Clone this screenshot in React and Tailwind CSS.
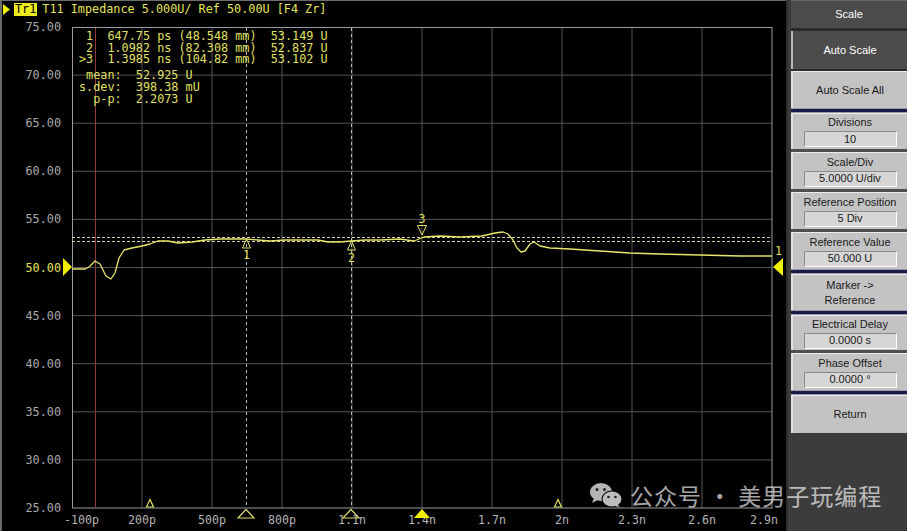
import React from "react";

const yVals = ["75.00", "70.00", "65.00", "60.00", "55.00", "50.00", "45.00", "40.00", "35.00", "30.00", "25.00"];
const xVals = ["-100p", "200p", "500p", "800p", "1.1n", "1.4n", "1.7n", "2n", "2.3n", "2.6n", "2.9n"];

const trace = [
  [72, 269], [85, 269], [89, 267], [95, 261], [100, 264], [106, 276], [111, 279], [115, 273], [119, 258],
  [124, 250], [132, 248], [142, 246], [150, 244], [158, 241], [168, 241], [178, 243], [192, 242], [205, 240],
  [220, 239], [235, 239], [246, 239], [258, 240], [270, 241], [285, 240], [300, 240], [318, 240], [328, 242],
  [340, 242], [351, 241], [365, 240], [380, 240], [400, 239], [414, 241], [424, 237], [440, 236], [460, 237],
  [482, 236], [495, 233], [503, 232], [508, 234], [513, 240], [517, 248], [521, 252], [525, 251], [530, 244],
  [534, 242], [540, 246], [550, 248], [570, 249], [600, 251], [630, 253], [660, 254], [700, 255], [740, 256], [772, 256],
];

function Box({ children }) {
  return (
    <div className="mx-auto mt-[2px] flex h-[16px] w-[93px] items-center justify-center border border-t-[#8a8a8a] border-l-[#8a8a8a] border-r-white border-b-white bg-[#d6d6d6] text-[11px] leading-none text-[#1a1a1a]">
      {children}
    </div>
  );
}

function Field({ label, value, h = "h-[37px]" }) {
  return (
    <div className={`${h} flex flex-col items-center justify-center border-t border-l-2 border-t-[#ececec] border-l-[#e2e2e2] bg-[#c3c3c3]`}>
      <div className="text-[11px] leading-[13px] text-[#1a1a1a]">{label}</div>
      <Box>{value}</Box>
    </div>
  );
}

function Btn({ children, h = "h-[37px]" }) {
  return (
    <div className={`${h} flex flex-col items-center justify-center border-t border-l-2 border-t-[#ececec] border-l-[#e2e2e2] bg-[#c3c3c3] text-[11px] leading-[15px] text-[#1a1a1a]`}>
      {children}
    </div>
  );
}

const Gap = () => <div className="h-[3px] bg-[#4e4e4e]" />;
const Navy = () => (
  <div className="flex h-[5px] flex-col justify-center bg-[#9a9aa4]">
    <div className="h-[3px] bg-[#1a1a4a]" />
  </div>
);

function WeChat() {
  return (
    <svg width="34" height="26" viewBox="0 0 34 26">
      <ellipse cx="12" cy="10" rx="11" ry="9" fill="#b4b4b4" />
      <path d="M5 16 L3 21 L9 18 Z" fill="#b4b4b4" />
      <circle cx="8" cy="7.5" r="1.5" fill="#222" />
      <circle cx="15.5" cy="7.5" r="1.5" fill="#222" />
      <ellipse cx="23" cy="17" rx="10.5" ry="8.5" fill="#000" />
      <ellipse cx="23" cy="17" rx="9.5" ry="7.6" fill="#bcbcbc" />
      <path d="M28 22 L31 25.5 L25 23.5 Z" fill="#bcbcbc" />
      <circle cx="19.5" cy="15" r="1.3" fill="#222" />
      <circle cx="26.5" cy="15" r="1.3" fill="#222" />
    </svg>
  );
}

export default function App() {
  const mono = "font-['DejaVu_Sans_Mono','Liberation_Mono',monospace]";
  const pts = trace.map((p) => p.join(",")).join(" ");
  return (
    <div className="relative flex h-[531px] w-[907px] overflow-hidden bg-black font-['Liberation_Sans',Arial,sans-serif]">
      <div className={`flex h-full w-[786px] flex-col border-t border-l-2 border-[#6c6c6c] bg-black ${mono}`}>
        <div className="flex h-[17px] items-center gap-[4px] pl-[1px] text-[11.8px] leading-none text-[#e4e45a]">
          <svg width="7" height="11" viewBox="0 0 7 11">
            <path d="M0 0 L7 5.5 L0 11 Z" fill="#f0f000" />
          </svg>
          <span className="bg-[#ecec1c] px-[1px] py-[1px] text-black">Tr1</span>
          <span className="ml-[1px] whitespace-pre">T11 Impedance 5.000U/ Ref 50.00U [F4 Zr]</span>
        </div>
        <div className="relative flex-1">
          <svg width="784" height="513" viewBox="2 18 784 513" className="block">
            {Array.from({ length: 9 }, (_, i) => (
              <line key={"v" + i} x1={142 + 70 * i} y1="27" x2={142 + 70 * i} y2="508" stroke="#545454" strokeWidth="1" />
            ))}
            {Array.from({ length: 9 }, (_, i) => (
              <line key={"h" + i} x1="72" y1={75.1 + 48.1 * i} x2="772" y2={75.1 + 48.1 * i} stroke="#545454" strokeWidth="1" />
            ))}
            <rect x="72.5" y="27.5" width="699.5" height="480.5" fill="none" stroke="#9c9c9c" strokeWidth="1" />
            <line x1="95.5" y1="28" x2="95.5" y2="508" stroke="#8c3a3a" strokeWidth="1" />
            <line x1="246.5" y1="28" x2="246.5" y2="508" stroke="#bdbdbd" strokeWidth="1" strokeDasharray="3 3" />
            <line x1="351.5" y1="28" x2="351.5" y2="508" stroke="#bdbdbd" strokeWidth="1" strokeDasharray="3 3" />
            <line x1="72" y1="237.5" x2="772" y2="237.5" stroke="#d2d2a6" strokeWidth="1" strokeDasharray="3 2" />
            <line x1="72" y1="241.5" x2="772" y2="241.5" stroke="#d2d2a6" strokeWidth="1" strokeDasharray="3 2" />
            <polyline points={pts} fill="none" stroke="#e6e66a" strokeWidth="1.3" strokeLinejoin="round" />

            {yVals.map((v, i) => (
              <text key={v} x="61" y={27 + 48.1 * i} textAnchor="end" dominantBaseline="central" fontSize="11.8" fill={v === "50.00" ? "#e4e45a" : "#a9a9a9"}>
                {v}
              </text>
            ))}
            {xVals.map((v, i) => (
              <text key={v} x={i === 0 ? 64 : i === 10 ? 778 : 72 + 70 * i} y="520" textAnchor={i === 0 ? "start" : i === 10 ? "end" : "middle"} dominantBaseline="central" fontSize="11.6" fill="#b4b4b4">
                {v}
              </text>
            ))}

            <path d="M63 258 L72 267 L63 276 Z" fill="#f0f000" />
            <path d="M783 258 L773 267 L783 276 Z" fill="#f0f000" />
            <text x="775" y="251" fontSize="11.6" dominantBaseline="central" fill="#e4e45a">1</text>

            <path d="M246.5 239 L242.5 248 L250.5 248 Z" fill="none" stroke="#e0e060" strokeWidth="1" />
            <text x="246.5" y="254.5" textAnchor="middle" dominantBaseline="central" fontSize="11.6" fill="#e0e060">1</text>
            <path d="M351.5 241 L347.5 250 L355.5 250 Z" fill="none" stroke="#e0e060" strokeWidth="1" />
            <text x="351.5" y="257.5" textAnchor="middle" dominantBaseline="central" fontSize="11.6" fill="#e0e060">2</text>
            <text x="422" y="219" textAnchor="middle" dominantBaseline="central" fontSize="11.6" fill="#e0e060">3</text>
            <path d="M417.5 225.5 L426.5 225.5 L422 235 Z" fill="none" stroke="#e0e060" strokeWidth="1" />

            <path d="M150 499.5 L146.5 507 L153.5 507 Z" fill="none" stroke="#e0e060" strokeWidth="1.2" />
            <path d="M558 499.5 L554.5 507 L561.5 507 Z" fill="none" stroke="#e0e060" strokeWidth="1.2" />
            <path d="M246 509.5 L238 518 L254 518 Z" fill="none" stroke="#d8d868" strokeWidth="1.2" />
            <path d="M351 509.5 L343 518 L359 518 Z" fill="none" stroke="#d8d868" strokeWidth="1.2" />
            <path d="M422 509 L414 518 L430 518 Z" fill="#f0f000" />
          </svg>

          <div className="absolute left-[77px] top-[13px] text-[11.8px] leading-[11.6px] whitespace-pre text-[#e0e060]">
            <div>{" 1  647.75 ps (48.548 mm)  53.149 U"}</div>
            <div>{" 2  1.0982 ns (82.308 mm)  52.837 U"}</div>
            <div>{">3  1.3985 ns (104.82 mm)  53.102 U"}</div>
            <div className="mt-[4.6px]">{" mean:  52.925 U"}</div>
            <div>{"s.dev:  398.38 mU"}</div>
            <div>{"  p-p:  2.2073 U"}</div>
          </div>
        </div>
      </div>

      <div className="flex h-full w-[121px] flex-col border-l-2 border-[#2e2e2e] bg-[#3c3c3c] pl-[3px]">
        <div className="flex h-[28px] items-center justify-center border-t border-[#6a6a6a] bg-[#4b4b4b] text-[11px] text-white">Scale</div>
        <div className="h-[3px] bg-[#2c2c2c]" />
        <div className="flex h-[38px] items-center justify-center border-l-2 border-[#b8b8b8] bg-[#4c4c4c] text-[11px] text-white">Auto Scale</div>
        <div className="h-[2px] bg-[#2c2c2c]" />
        <Btn>Auto Scale All</Btn>
        <Navy />
        <Field label="Divisions" value="10" h="h-[36px]" />
        <Gap />
        <Field label="Scale/Div" value="5.0000 U/div" />
        <Gap />
        <Field label="Reference Position" value="5 Div" />
        <Gap />
        <Field label="Reference Value" value="50.000 U" />
        <Navy />
        <Btn h="h-[36px]">
          <span>Marker -&gt;</span>
          <span>Reference</span>
        </Btn>
        <Navy />
        <Field label="Electrical Delay" value="0.0000 s" h="h-[35px]" />
        <Gap />
        <Field label="Phase Offset" value="0.0000 °" />
        <Navy />
        <Btn h="h-[38px]">Return</Btn>
        <div className="flex-1 bg-[#3c3c3c]" />
      </div>

      <div className="pointer-events-none absolute left-[589px] top-[482px] flex items-center gap-[7px]">
        <WeChat />
        <span className="text-[23px] leading-none tracking-[1px] text-white/65 font-['Noto_Sans_CJK_SC',sans-serif]">公众号 · 美男子玩编程</span>
      </div>
    </div>
  );
}
